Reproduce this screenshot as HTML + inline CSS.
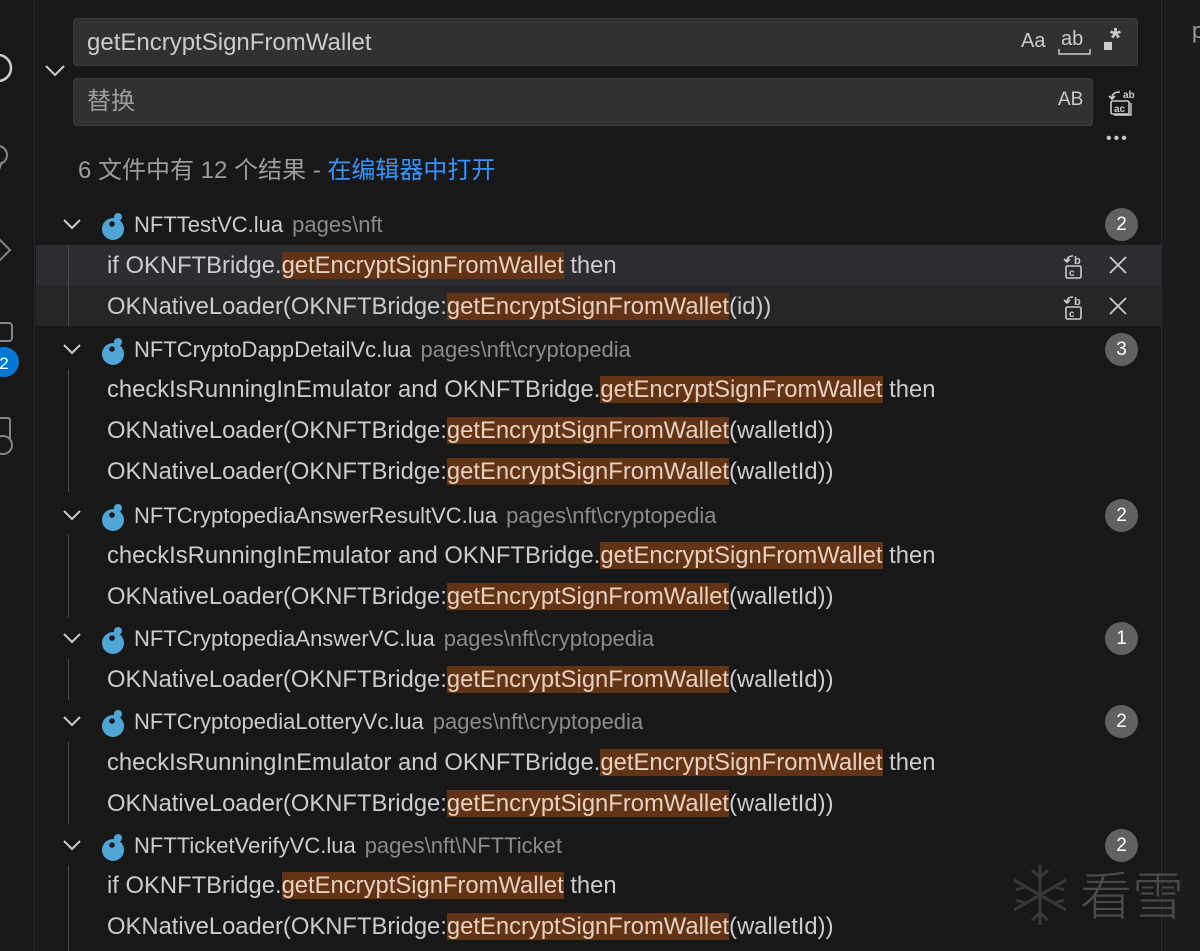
<!DOCTYPE html>
<html><head><meta charset="utf-8"><style>
*{margin:0;padding:0;box-sizing:border-box}
body{width:1200px;height:951px;background:#181818;overflow:hidden;position:relative;font-family:"Segoe UI","Liberation Sans","Noto Sans CJK SC",sans-serif;color:#cccccc}
.abs{position:absolute}
.act{left:0;top:0;width:35px;height:951px;background:#181818;border-right:1px solid #2b2b2b}
.right{left:1161px;top:0;width:39px;height:951px;background:#1c1c1c;border-left:1px solid #2b2b2b}
.inp{background:#313131;border-radius:4px;border:1px solid #3c3c3c}
.row{position:absolute;left:36px;width:1125px;height:41px;font-size:23.8px;line-height:41px;white-space:nowrap}
.m{padding-left:71px}
.h{background:#623315;color:#e8d0c0}
.f{padding-left:98px;font-size:22px}
.p{color:#8b8b8b;font-size:22px;margin-left:9px}
.chev{position:absolute;left:26px;top:14px}
.ico{position:absolute;left:64px;top:7px}
.badge{position:absolute;left:1069px;top:4px;width:33px;height:33px;border-radius:50%;background:#616161;color:#fff;font-size:19px;line-height:33px;text-align:center}
.guide{position:absolute;left:68px;width:1px;background:#4a4a4a}
</style></head><body>
<div class="abs act"></div>
<div class="abs right"><div style="position:absolute;left:30px;top:18px;font-size:22px;color:#9d9d9d">p</div></div>
<svg class="abs" style="left:0;top:0" width="35" height="951">
<circle cx="-2" cy="68" r="13" fill="none" stroke="#cccccc" stroke-width="2.5"/>
<circle cx="-2" cy="155" r="9" fill="none" stroke="#858585" stroke-width="2"/><path d="M2 162 L-2 172" stroke="#858585" stroke-width="2"/>
<path d="M-2 238 L10 250 L-2 262" fill="none" stroke="#858585" stroke-width="2"/>
<rect x="-10" y="323" width="22" height="18" rx="3" fill="none" stroke="#858585" stroke-width="2"/>
<circle cx="4" cy="362" r="15" fill="#0078d4"/><text x="4" y="369" fill="#fff" font-size="17" font-family="Liberation Sans" text-anchor="middle">2</text>
<rect x="-10" y="418" width="20" height="22" rx="2" fill="none" stroke="#858585" stroke-width="2"/><circle cx="3" cy="445" r="9" fill="#181818" stroke="#858585" stroke-width="2"/>
</svg>
<svg class="abs" style="left:44px;top:64px" width="22" height="14"><path d="M2 2 L11 11 L20 2" fill="none" stroke="#cccccc" stroke-width="2"/></svg>
<div class="abs inp" style="left:73px;top:18px;width:1065px;height:48px"></div>
<div class="abs" style="left:87px;top:28px;font-size:24px;color:#cccccc;line-height:30px">getEncryptSignFromWallet</div>
<div class="abs" style="left:1021px;top:30px;font-size:20px;color:#cccccc">Aa</div>
<div class="abs" style="left:1061px;top:28px;font-size:20px;color:#cccccc">ab</div>
<svg class="abs" style="left:1058px;top:48px" width="34" height="8"><path d="M1 1 V6 H32 V1" fill="none" stroke="#ccc" stroke-width="1.5"/></svg>
<div class="abs" style="left:1104px;top:42px;width:8px;height:8px;background:#ccc"></div>
<div class="abs" style="left:1110px;top:22px;font-size:28px;color:#ccc;font-weight:bold">*</div>
<div class="abs inp" style="left:73px;top:78px;width:1020px;height:48px"></div>
<div class="abs" style="left:87px;top:87px;font-size:24px;color:#9d9d9d;line-height:30px">替换</div>
<div class="abs" style="left:1058px;top:89px;font-size:19px;color:#cccccc">AB</div>
<svg class="abs" style="left:1108px;top:88px" width="28" height="28"><path d="M12 4 Q4 4 4 10 M1 8 L4 11 L7 8" fill="none" stroke="#ccc" stroke-width="1.6"/><text x="15" y="10" fill="#ccc" font-size="10" font-family="Liberation Sans" font-weight="bold">ab</text><rect x="3" y="13" width="18" height="13" rx="1.5" fill="none" stroke="#ccc" stroke-width="1.6"/><path d="M23 15 V27 H6" fill="none" stroke="#ccc" stroke-width="1.4"/><text x="6" y="24" fill="#ccc" font-size="10" font-family="Liberation Sans" font-weight="bold">ac</text></svg>
<div class="abs" style="left:1106px;top:130px;font-size:16px;color:#ccc;letter-spacing:2px">•••</div>
<div class="abs" style="left:78px;top:155px;font-size:24px;color:#9d9d9d;line-height:32px">6 文件中有 12 个结果 - <span style="color:#3794ff">在编辑器中打开</span></div>

<div class="abs" style="left:36px;top:245px;width:1125px;height:41px;background:#2b2d31"></div>
<div class="abs" style="left:36px;top:286px;width:1125px;height:40px;background:#262628"></div>

<div class="guide" style="top:245px;height:81px"></div>
<div class="guide" style="top:369px;height:123px"></div>
<div class="guide" style="top:535px;height:82px"></div>
<div class="guide" style="top:659px;height:41px"></div>
<div class="guide" style="top:742px;height:82px"></div>
<div class="guide" style="top:865px;height:86px"></div>

<div id="rows"></div>
<script>
const C='<svg class="chev" width="20" height="14"><path d="M2 2 L10 10 L18 2" fill="none" stroke="#cccccc" stroke-width="2"/></svg>';
const I='<svg class="ico" width="30" height="30"><circle cx="13" cy="18" r="11" fill="#4fa6d6"/><circle cx="12" cy="13" r="2.8" fill="#181818"/><circle cx="18" cy="6" r="4" fill="#4fa6d6"/></svg>';
const G='<span class="h">getEncryptSignFromWallet</span>';
const A=['if OKNFTBridge.'+G+' then'];
const L=w=>'OKNativeLoader(OKNFTBridge:'+G+'('+w+'))';
const K='checkIsRunningInEmulator and OKNFTBridge.'+G+' then';
const rows=[
['f',224,'NFTTestVC.lua','pages\\nft',2],['m',265,A[0],1],['m',306,L('id'),1],
['f',349,'NFTCryptoDappDetailVc.lua','pages\\nft\\cryptopedia',3],['m',389,K],['m',430,L('walletId')],['m',471,L('walletId')],
['f',515,'NFTCryptopediaAnswerResultVC.lua','pages\\nft\\cryptopedia',2],['m',555,K],['m',596,L('walletId')],
['f',638,'NFTCryptopediaAnswerVC.lua','pages\\nft\\cryptopedia',1],['m',679,L('walletId')],
['f',721,'NFTCryptopediaLotteryVc.lua','pages\\nft\\cryptopedia',2],['m',762,K],['m',803,L('walletId')],
['f',845,'NFTTicketVerifyVC.lua','pages\\nft\\NFTTicket',2],['m',885,A[0]],['m',926,L('walletId')]];
const RI='<svg style="position:absolute;left:1027px;top:8px" width="22" height="26"><path d="M10 3 Q4 3 4 8 M1 6 L4 9 L7 6" fill="none" stroke="#ccc" stroke-width="1.6"/><text x="11" y="11" fill="#ccc" font-size="11" font-family="Liberation Sans" font-weight="bold">b</text><rect x="3" y="13" width="15" height="12" rx="1.5" fill="none" stroke="#ccc" stroke-width="1.6"/><text x="6" y="23" fill="#ccc" font-size="10" font-family="Liberation Sans" font-weight="bold">c</text></svg><svg style="position:absolute;left:1073px;top:11px" width="18" height="18"><path d="M1 1 L17 17 M17 1 L1 17" stroke="#ccc" stroke-width="1.8"/></svg>';
let h='';
for(const r of rows){
 if(r[0]=='f') h+=`<div class="row f" style="top:${r[1]-20}px">${C}${I}${r[2]}<span class="p">${r[3]}</span><div class="badge">${r[4]}</div></div>`;
 else h+=`<div class="row m" style="top:${r[1]-20}px">${r[2]}${r[3]?RI:''}</div>`;
}
document.getElementById('rows').innerHTML=h;
</script>
<svg class="abs" style="left:1010px;top:860px" width="80" height="70" opacity="0.4">
<g stroke="#6a6a6a" stroke-width="3" fill="none">
<path d="M30 5 V65 M4 20 L56 50 M4 50 L56 20"/>
<path d="M22 10 L30 17 L38 10 M22 60 L30 53 L38 60 M6 30 L15 27 M6 40 L15 43 M54 30 L45 27 M54 40 L45 43"/>
</g></svg>
<div class="abs" style="left:1080px;top:858px;font-size:52px;color:#4a4a4a;line-height:70px;font-family:'Noto Sans CJK SC',sans-serif;font-weight:300">看雪</div>
</body></html>
